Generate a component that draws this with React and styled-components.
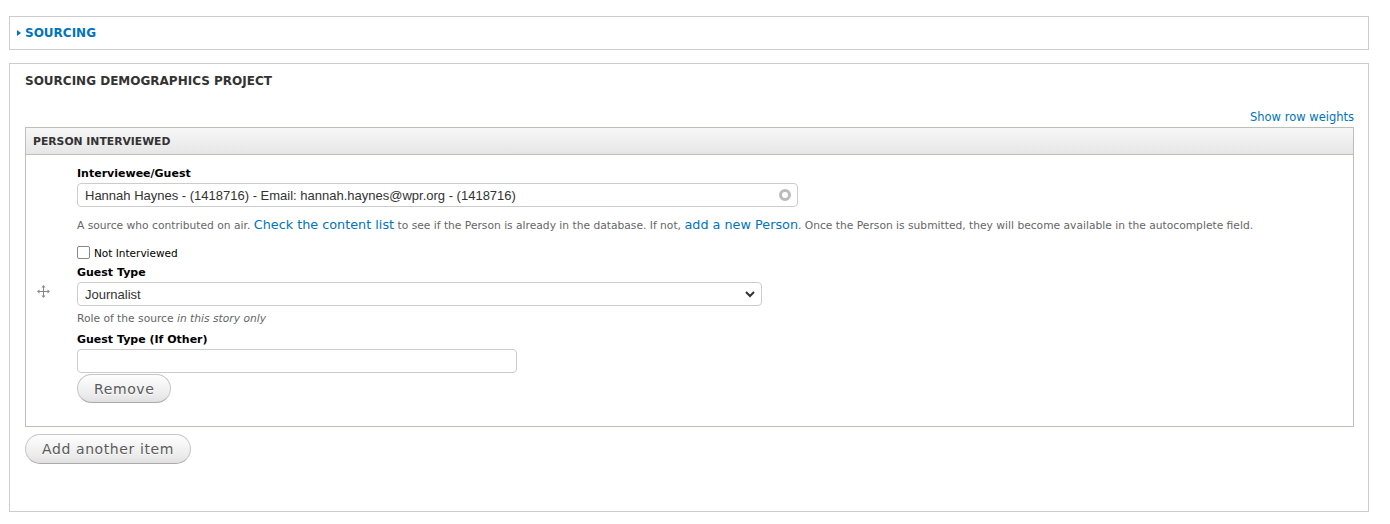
import styled, { createGlobalStyle } from "styled-components";

const GlobalStyle = createGlobalStyle`
  body {
    margin: 0;
    background: #fff;
    font-family: "DejaVu Sans", Verdana, sans-serif;
    color: #333;
  }
`;

// Style
const Page = styled.div`
  padding: 16px 21px 12px 9px;
  display: flex;
  flex-direction: column;
  gap: 13px;
`;

const Fieldset = styled.div`
  border: 1px solid #ccc;
  background: #fff;
  padding: ${(p) => (p.$collapsed ? "9px 15px 9px 7px" : "10px 14px 0 15px")};
  min-height: ${(p) => (p.$collapsed ? "auto" : "449px")};
  box-sizing: border-box;
`;

const Legend = styled.div`
  display: flex;
  align-items: center;
  gap: 4px;
  font-size: 12px;
  font-weight: bold;
  text-transform: uppercase;
  color: ${(p) => (p.$link ? "#0074bd" : "#333")};
  line-height: 14px;
`;

const Caret = styled.span`
  width: 0;
  height: 0;
  border-top: 3.5px solid transparent;
  border-bottom: 3.5px solid transparent;
  border-left: 4px solid #0074bd;
`;

const WeightsRow = styled.div`
  display: flex;
  justify-content: flex-end;
  margin-top: 22px;
  margin-bottom: 2px;
  line-height: 15px;
`;

const Link = styled.a`
  color: #0074bd;
  text-decoration: none;
  font-size: ${(p) => p.$size || "11.5px"};
  cursor: pointer;
`;

const Table = styled.div`
  border: 1px solid #bebfb9;
`;

const TableHead = styled.div`
  height: 26px;
  display: flex;
  align-items: center;
  padding-left: 7px;
  background: linear-gradient(#f7f7f7, #e6e6e6);
  border-bottom: 1px solid #bebfb9;
  font-size: 10.8px;
  font-weight: bold;
  text-transform: uppercase;
  color: #333;
`;

const Row = styled.div`
  display: flex;
`;

const Handle = styled.div`
  width: 51px;
  display: flex;
  align-items: center;
  padding-left: 11px;
  padding-top: 2px;
  box-sizing: border-box;
`;

const Fields = styled.div`
  display: flex;
  flex-direction: column;
  flex: 1;
  padding: 11px 0 23px;
`;

const Label = styled.label`
  display: block;
  font-size: 11px;
  font-weight: bold;
  color: #000;
  line-height: 15px;
  margin-bottom: 2px;
`;

const Input = styled.div`
  width: ${(p) => p.$width};
  height: 24px;
  box-sizing: border-box;
  border: 1px solid #ccc;
  border-radius: 4px;
  display: flex;
  align-items: center;
  justify-content: space-between;
  padding: 0 6px 0 7px;
  font-family: "Liberation Sans", Arial, sans-serif;
  font-size: 13px;
  color: #333;
  background: #fff;
`;

const Throbber = styled.span`
  width: 6px;
  height: 6px;
  border-radius: 50%;
  border: 3px solid #bbb;
`;

const Description = styled.div`
  font-size: 10.7px;
  color: #666;
  line-height: 16px;
  margin: ${(p) => p.$margin || "10px 0 12px"};
`;

const CheckRow = styled.label`
  display: flex;
  align-items: center;
  gap: 4px;
  font-size: 10.5px;
  color: #000;
  margin-bottom: 6px;
`;

const Box = styled.span`
  width: 11px;
  height: 11px;
  border: 1px solid #888;
  border-radius: 2px;
  background: #fff;
`;

const Chevron = styled.svg`
  width: 10px;
  height: 8px;
`;

const Button = styled.button`
  align-self: flex-start;
  height: ${(p) => p.$height || "29px"};
  padding: 0 16px;
  border: 1px solid #c6c6c6;
  border-bottom-color: #aaa;
  border-radius: 20px;
  background: linear-gradient(#fefefe 0%, #ebebeb 75%, #e0e0e0 100%);
  font-family: "DejaVu Sans", Verdana, sans-serif;
  font-size: 14px;
  letter-spacing: 0.6px;
  color: #5a5a5a;
  text-shadow: 0 1px #fff;
  cursor: pointer;
`;

const Actions = styled.div`
  display: flex;
  margin-top: ${(p) => p.$top || "1px"};
`;

function DragIcon() {
  return (
    <svg width="13" height="13" viewBox="0 0 13 13" fill="#888">
      <rect x="6" y="2" width="1" height="9" />
      <rect x="2" y="6" width="9" height="1" />
      <path d="M6.5 0 L8.5 2.5 L4.5 2.5 Z" />
      <path d="M6.5 13 L8.5 10.5 L4.5 10.5 Z" />
      <path d="M0 6.5 L2.5 4.5 L2.5 8.5 Z" />
      <path d="M13 6.5 L10.5 4.5 L10.5 8.5 Z" />
    </svg>
  );
}

export default function App() {
  return (
    <>
      <GlobalStyle />
      <Page>
        {/* Collapsed group */}
        <Fieldset $collapsed>
          <Legend $link>
            <Caret />
            Sourcing
          </Legend>
        </Fieldset>

        {/* Demographics */}
        <Fieldset>
          <Legend>Sourcing Demographics Project</Legend>

          <WeightsRow>
            <Link>Show row weights</Link>
          </WeightsRow>

          <Table>
            <TableHead>Person Interviewed</TableHead>
            <Row>
              <Handle>
                <DragIcon />
              </Handle>
              <Fields>
                <Label>Interviewee/Guest</Label>
                <Input $width="721px">
                  Hannah Haynes - (1418716) - Email: hannah.haynes@wpr.org - (1418716)
                  <Throbber />
                </Input>
                <Description>
                  A source who contributed on air. <Link $size="12.8px">Check the content list</Link> to
                  see if the Person is already in the database. If not,{" "}
                  <Link $size="12.8px">add a new Person</Link>. Once the Person is submitted, they will
                  become available in the autocomplete field.
                </Description>

                <CheckRow>
                  <Box />
                  Not Interviewed
                </CheckRow>

                <Label>Guest Type</Label>
                <Input $width="685px">
                  Journalist
                  <Chevron viewBox="0 0 10 8">
                    <path d="M1 2 L5 6 L9 2" stroke="#333" strokeWidth="2" fill="none" />
                  </Chevron>
                </Input>
                <Description $margin="5px 0 5px">
                  Role of the source <em>in this story only</em>
                </Description>

                <Label>Guest Type (If Other)</Label>
                <Input $width="440px" />
                <Actions>
                  <Button>Remove</Button>
                </Actions>
              </Fields>
            </Row>
          </Table>

          <Actions $top="7px">
            <Button $height="30px">Add another item</Button>
          </Actions>
        </Fieldset>
      </Page>
    </>
  );
}
